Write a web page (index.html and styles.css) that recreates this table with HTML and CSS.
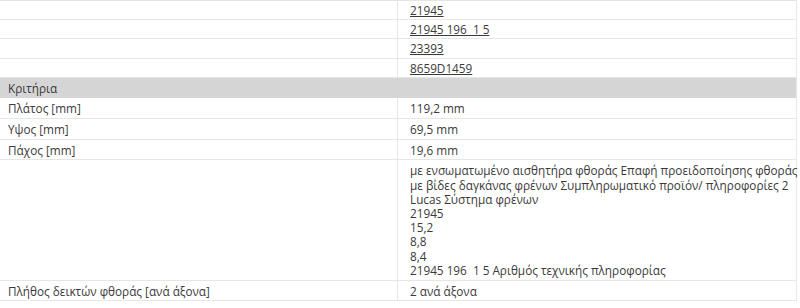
FILE: index.html
```html
<!DOCTYPE html>
<html lang="el">
<head>
<meta charset="utf-8">
<link rel="stylesheet" href="styles.css">
</head>
<body>
<table class="spec">
  <tbody class="refs">
    <tr><td class="k"></td><td class="v"><a href="#">21945</a></td></tr>
    <tr><td class="k"></td><td class="v"><a href="#">21945 196&nbsp; 1 5</a></td></tr>
    <tr><td class="k"></td><td class="v"><a href="#">23393</a></td></tr>
    <tr><td class="k"></td><td class="v"><a href="#">8659D1459</a></td></tr>
  </tbody>
  <tbody class="crit">
    <tr class="head"><td class="k">Κριτήρια</td><td class="v"></td></tr>
    <tr><td class="k">Πλάτος [mm]</td><td class="v">119,2 mm</td></tr>
    <tr><td class="k">Υψος [mm]</td><td class="v">69,5 mm</td></tr>
    <tr><td class="k">Πάχος [mm]</td><td class="v">19,6 mm</td></tr>
    <tr><td class="k"></td><td class="v"><span class="ln">με ενσωματωμένο αισθητήρα φθοράς Επαφή προειδοποίησης φθοράς</span><span class="ln">με βίδες δαγκάνας φρένων Συμπληρωματικό προϊόν/ πληροφορίες 2</span><span class="ln">Lucas Σύστημα φρένων</span><span class="ln">21945</span><span class="ln">15,2</span><span class="ln">8,8</span><span class="ln">8,4</span><span class="ln">21945 196&nbsp; 1 5 Αριθμός τεχνικής πληροφορίας</span></td></tr>
    <tr><td class="k">Πλήθος δεικτών φθοράς [ανά άξονα]</td><td class="v">2 ανά άξονα</td></tr>
  </tbody>
</table>
</body>
</html>
```

FILE: styles.css
```css
html, body {
  margin: 0;
  padding: 0;
  background: #ffffff;
}

body {
  font-family: "Open Sans", "Noto Sans", sans-serif;
  font-size: 11.75px;
  line-height: 14.2px;
  color: #3a3a3a;
  overflow: hidden;
}

.spec {
  width: 797px;
  border-collapse: collapse;
  table-layout: fixed;
  border-top: 1px solid #e4e4e4;
  border-right: 1px solid #e8e8e8;
}

.spec td {
  border-bottom: 1px solid #e6e6e6;
  vertical-align: top;
  white-space: nowrap;
}

.spec .k {
  width: 389px;
  padding: 2px 0 2px 8px;
  border-right: 1px solid #e6e6e6;
}

.spec .v {
  padding: 2px 0 2px 12px;
  overflow: visible;
}

.spec .crit .k,
.spec .crit .v {
  padding-top: 3px;
  padding-bottom: 2.6px;
}

.spec .crit .head .k,
.spec .crit .head .v {
  background: #d5d5d5;
  border-right: none;
  border-bottom: none;
  padding-top: 3px;
  padding-bottom: 3px;
}

.refs a {
  color: #3a3a3a;
  text-decoration: underline;
}

.ln {
  display: block;
}
```
